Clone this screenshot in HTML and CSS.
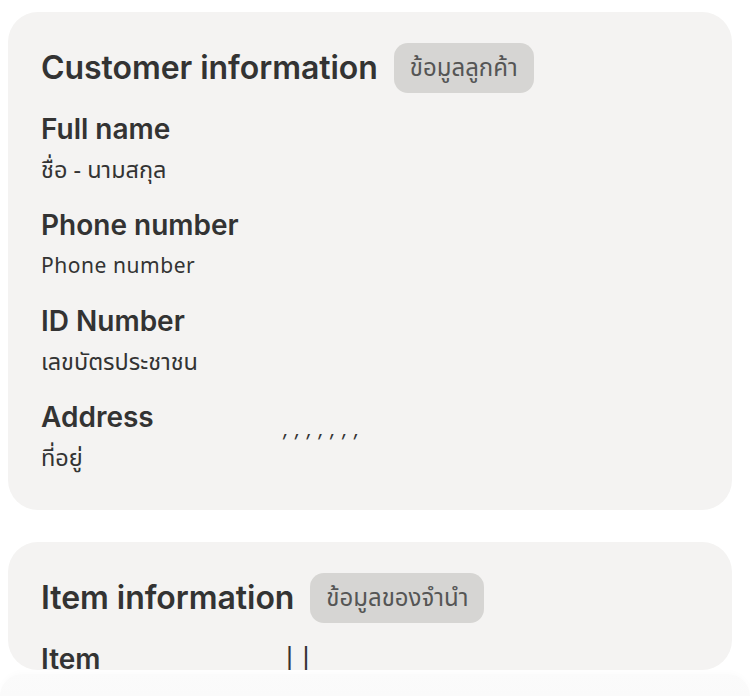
FILE: index.html
```html
<!DOCTYPE html>
<html lang="th">
<head>
<meta charset="utf-8">
<title>Customer information</title>
<link rel="stylesheet" href="styles.css">
</head>
<body>
<main class="page">
  <section class="card">
    <div class="card-head">
      <h2 class="card-title">Customer information</h2>
      <span class="pill">ข้อมูลลูกค้า</span>
    </div>
    <div class="rows">
      <div class="row">
        <div class="field">
          <div class="label">Full name</div>
          <div class="sub thai">ชื่อ - นามสกุล</div>
        </div>
        <div class="value"></div>
      </div>
      <div class="row">
        <div class="field">
          <div class="label">Phone number</div>
          <div class="sub">Phone number</div>
        </div>
        <div class="value"></div>
      </div>
      <div class="row">
        <div class="field">
          <div class="label">ID Number</div>
          <div class="sub thai">เลขบัตรประชาชน</div>
        </div>
        <div class="value"></div>
      </div>
      <div class="row">
        <div class="field">
          <div class="label">Address</div>
          <div class="sub thai">ที่อยู่</div>
        </div>
        <div class="value commas">, , , , , , ,</div>
      </div>
    </div>
  </section>

  <section class="card card-clipped">
    <div class="card-head">
      <h2 class="card-title">Item information</h2>
      <span class="pill">ข้อมูลของจำนำ</span>
    </div>
    <div class="rows">
      <div class="row">
        <div class="field">
          <div class="label">Item</div>
        </div>
        <div class="value bars">| |</div>
      </div>
    </div>
  </section>

  <div class="footer-sheet"></div>
</main>
</body>
</html>
```

FILE: styles.css
```css
html, body {
  margin: 0;
  padding: 0;
  background: #ffffff;
}

body {
  height: 696px;
  overflow: hidden;
  font-family: Inter, "Noto Sans", "Noto Sans Thai", sans-serif;
  color: #323232;
}

.page {
  padding: 12px 18px 0 8px;
  display: flex;
  flex-direction: column;
  gap: 32px;
}

.card {
  background: #f4f3f2;
  border-radius: 30px;
  padding: 31px 33px 39px 33px;
}

.card-clipped {
  height: 128px;
  box-sizing: border-box;
  overflow: hidden;
  padding-bottom: 0;
}

.card-head {
  display: flex;
  align-items: center;
  gap: 16px;
  height: 50px;
}

.card-title {
  margin: 0 0 2px 0;
  font-size: 32px;
  font-weight: 600;
  letter-spacing: -0.05px;
  color: #333333;
}

.pill {
  display: inline-flex;
  align-items: center;
  height: 50px;
  padding: 0 16px;
  border-radius: 14px;
  background: #d6d5d3;
  color: #555555;
  font-size: 24px;
  font-family: "Noto Sans", "Noto Sans Thai", sans-serif;
}

.rows {
  display: flex;
  flex-direction: column;
  gap: 26px;
  margin-top: 20px;
}

.row {
  display: grid;
  grid-template-columns: 242px 1fr;
}

.label {
  font-size: 28px;
  line-height: 32px;
  font-weight: 600;
  color: #333333;
}

.sub {
  margin-top: 10px;
  font-size: 21px;
  line-height: 28px;
  font-family: "Noto Sans", "Noto Sans Thai", sans-serif;
  letter-spacing: 0.55px;
  color: #333333;
}

.sub.thai {
  font-size: 23.5px;
  letter-spacing: 0;
}

.value {
  font-size: 20px;
  line-height: 28px;
  color: #333333;
}

.commas {
  margin-top: 14px;
  font-style: italic;
  letter-spacing: 0.2px;
}

.bars {
  font-size: 27px;
  line-height: 32px;
  margin-top: 4px;
  padding-left: 2px;
  letter-spacing: 0;
}

.footer-sheet {
  margin-top: -28px;
  margin-left: -8px;
  margin-right: -18px;
  height: 22px;
  border-radius: 40px 40px 0 0;
  background: linear-gradient(#fbfbfb, #fafafa);
  box-shadow: 0 -2px 6px rgba(0, 0, 0, 0.015);
}
```
